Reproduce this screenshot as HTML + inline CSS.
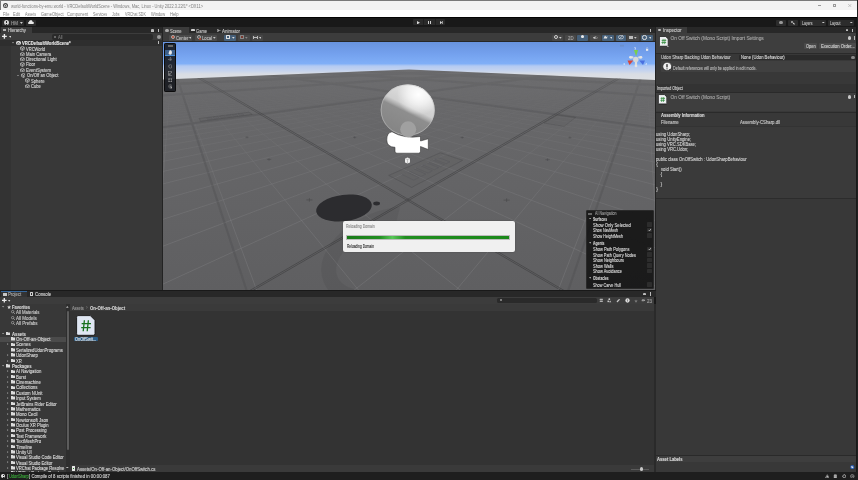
<!DOCTYPE html>
<html><head><meta charset="utf-8">
<style>
*{box-sizing:border-box;margin:0;padding:0}
html,body{width:858px;height:480px;overflow:hidden;background:#191919;font-family:"Liberation Sans",sans-serif;color:#c4c4c4;position:relative}
.a{position:absolute}
.t{position:absolute;white-space:pre;line-height:1;-webkit-text-stroke:0.12px}
svg{position:absolute;display:block}
</style></head><body><div style="position:absolute;left:0;top:0;width:858px;height:480px;will-change:transform;overflow:hidden">
<div class="a" style="left:0px;top:0px;width:858px;height:10px;background:#f3f3f3;"></div>
<div class="a" style="left:0px;top:0px;width:858px;height:1px;background:#7a7a7a;"></div>
<div class="a" style="left:0px;top:0px;width:1px;height:17px;background:#7a7a7a;"></div>
<div class="a" style="left:0px;top:10px;width:858px;height:7px;background:#ffffff;"></div>
<div class="a" style="left:0px;top:17px;width:858px;height:1px;background:#050505;"></div>
<div class="a" style="left:3px;top:2.6px;width:5px;height:5px;border-radius:50%;background:#444"></div>
<svg style="left:3px;top:2.6px" width="5" height="5" viewBox="0 0 10 10"><path d="M5 2 L8 6.5 L2 6.5 Z" fill="none" stroke="#fff" stroke-width="1.2"/></svg>
<div class="t" style="left:10.5px;top:4.50px;font-size:4.5px;color:#808080;transform:scaleX(0.8892);transform-origin:0 0;-webkit-text-stroke:0;">world-functions-by-emu.world - VRCDefaultWorldScene - Windows, Mac, Linux - Unity 2022.3.22f1* &lt;DX11&gt;</div>
<div class="a" style="left:817.5px;top:5.2px;width:3.8px;height:0.5px;background:#9a9a9a;"></div>
<div class="a" style="left:832.8px;top:3.5px;width:3.4px;height:3.4px;border:0.45px solid #9a9a9a"></div>
<svg style="left:848px;top:3.6px" width="3.6" height="3.2" viewBox="0 0 3.6 3.2"><path d="M0 0L3.6 3.2M3.6 0L0 3.2" stroke="#9a9a9a" stroke-width="0.45"/></svg>
<div class="t" style="left:2.7px;top:12.70px;font-size:4.5px;color:#7c7c7c;transform:scaleX(0.8688);transform-origin:0 0;-webkit-text-stroke:0;">File</div>
<div class="t" style="left:13px;top:12.70px;font-size:4.5px;color:#7c7c7c;transform:scaleX(0.9027);transform-origin:0 0;-webkit-text-stroke:0;">Edit</div>
<div class="t" style="left:25px;top:12.70px;font-size:4.5px;color:#7c7c7c;transform:scaleX(0.8145);transform-origin:0 0;-webkit-text-stroke:0;">Assets</div>
<div class="t" style="left:40.5px;top:12.70px;font-size:4.5px;color:#7c7c7c;transform:scaleX(0.8907);transform-origin:0 0;-webkit-text-stroke:0;">GameObject</div>
<div class="t" style="left:67.3px;top:12.70px;font-size:4.5px;color:#7c7c7c;transform:scaleX(0.9112);transform-origin:0 0;-webkit-text-stroke:0;">Component</div>
<div class="t" style="left:93.3px;top:12.70px;font-size:4.5px;color:#7c7c7c;transform:scaleX(0.8113);transform-origin:0 0;-webkit-text-stroke:0;">Services</div>
<div class="t" style="left:112.3px;top:12.70px;font-size:4.5px;color:#7c7c7c;transform:scaleX(0.789);transform-origin:0 0;-webkit-text-stroke:0;">Jobs</div>
<div class="t" style="left:124.8px;top:12.70px;font-size:4.5px;color:#7c7c7c;transform:scaleX(0.7921);transform-origin:0 0;-webkit-text-stroke:0;">VRChat SDK</div>
<div class="t" style="left:150.6px;top:12.70px;font-size:4.5px;color:#7c7c7c;transform:scaleX(0.8872);transform-origin:0 0;-webkit-text-stroke:0;">Window</div>
<div class="t" style="left:169.8px;top:12.70px;font-size:4.5px;color:#7c7c7c;transform:scaleX(0.9076);transform-origin:0 0;-webkit-text-stroke:0;">Help</div>
<div class="a" style="left:0px;top:18px;width:858px;height:9px;background:#191919;"></div>
<div class="a" style="left:2px;top:19.5px;width:21.5px;height:6px;background:#2c2c2c;border-radius:1px"></div>
<div class="a" style="left:4.1px;top:20.1px;width:5px;height:5px;border-radius:50%;background:#d4d4d4"></div>
<div class="a" style="left:6.25px;top:21.1px;width:0.7px;height:2.0px;background:#2a2a2a;"></div>
<div class="a" style="left:6.25px;top:23.5px;width:0.7px;height:0.7px;background:#2a2a2a;"></div>
<div class="t" style="left:11.2px;top:21.68px;font-size:4.6px;color:#9a9a9a;transform:scaleX(0.9784);transform-origin:0 0;">HM</div>
<svg style="left:20.3px;top:21.8px" width="2.8" height="2" viewBox="0 0 3 2"><path d="M0 0H3L1.5 2Z" fill="#d0d0d0"/></svg>
<div class="a" style="left:25.8px;top:19.5px;width:10px;height:6px;background:#2c2c2c;border-radius:1px"></div>
<svg style="left:27.8px;top:20.3px" width="6" height="4" viewBox="0 0 12 8"><path d="M2 8 A2 2 0 0 1 2 4 A3.5 3.5 0 0 1 9 3.5 A2.3 2.3 0 0 1 10 8Z" fill="#e8e8e8"/></svg>
<div class="a" style="left:413px;top:19.2px;width:32px;height:6px;background:#2a2a2a;border-radius:1px"></div>
<div class="a" style="left:423.3px;top:19.2px;width:0.5px;height:6px;background:#1f1f1f;"></div>
<div class="a" style="left:434.5px;top:19.2px;width:0.5px;height:6px;background:#1f1f1f;"></div>
<svg style="left:416.5px;top:20.5px" width="3" height="3.4" viewBox="0 0 3 3.4"><path d="M0 0L3 1.7L0 3.4Z" fill="#d8d8d8"/></svg>
<div class="a" style="left:428.2px;top:20.6px;width:0.9px;height:3.2px;background:#cfcfcf;"></div>
<div class="a" style="left:430px;top:20.6px;width:0.9px;height:3.2px;background:#cfcfcf;"></div>
<svg style="left:439.5px;top:20.6px" width="3.2" height="3.2" viewBox="0 0 3.2 3.2"><path d="M0 0L2.2 1.6L0 3.2Z" fill="#d8d8d8"/><rect x="2.4" y="0" width="0.8" height="3.2" fill="#d8d8d8"/></svg>
<div class="a" style="left:776px;top:19.5px;width:10px;height:6px;background:#2c2c2c;border-radius:1px"></div>
<div class="a" style="left:779px;top:20.6px;width:3.8px;height:3.8px;border-radius:50%;background:#9a9a9a"></div>
<div class="a" style="left:788px;top:19.5px;width:9.5px;height:6px;background:#2c2c2c;border-radius:1px"></div>
<div class="a" style="left:790.8px;top:20.7px;width:2.6px;height:2.6px;border-radius:50%;border:0.7px solid #ddd"></div>
<div class="a" style="left:793px;top:23px;width:1.6px;height:0.7px;background:#ddd;transform:rotate(45deg)"></div>
<div class="a" style="left:800px;top:19.5px;width:26px;height:6px;background:#2c2c2c;border-radius:1px"></div>
<div class="t" style="left:802px;top:21.58px;font-size:4.6px;color:#bdbdbd;transform:scaleX(0.7605);transform-origin:0 0;">Layers</div>
<svg style="left:822px;top:21.6px" width="2.6" height="1.8" viewBox="0 0 3 2"><path d="M0 0H3L1.5 2Z" fill="#ccc"/></svg>
<div class="a" style="left:828px;top:19.5px;width:26px;height:6px;background:#2c2c2c;border-radius:1px"></div>
<div class="t" style="left:830px;top:21.58px;font-size:4.6px;color:#bdbdbd;transform:scaleX(0.7602);transform-origin:0 0;">Layout</div>
<svg style="left:850px;top:21.6px" width="2.6" height="1.8" viewBox="0 0 3 2"><path d="M0 0H3L1.5 2Z" fill="#ccc"/></svg>
<div class="a" style="left:0px;top:27px;width:858px;height:6px;background:#282828;"></div>
<div class="a" style="left:1px;top:27px;width:31px;height:6px;background:#3c3c3c;"></div>
<div class="a" style="left:3px;top:28.8px;width:3px;height:2.6px;background:transparent;background:repeating-linear-gradient(#b0b0b0 0 0.55px,transparent 0.55px 1px)"></div>
<div class="t" style="left:8px;top:29.28px;font-size:4.6px;color:#c8c8c8;transform:scaleX(0.9145);transform-origin:0 0;">Hierarchy</div>
<div class="a" style="left:150.5px;top:28.6px;width:3px;height:3px;border-radius:1px 1px 0 0;background:#bbb"></div>
<div class="a" style="left:157.6px;top:28.5px;width:0.9px;height:3.2px;background:#bbb;"></div>
<div class="a" style="left:0px;top:33px;width:162px;height:7px;background:#3c3c3c;"></div>
<svg style="left:2.4px;top:34.4px" width="4.8" height="4.8" viewBox="0 0 9 9"><path d="M4.5 0V9M0 4.5H9" stroke="#ececec" stroke-width="2.6"/></svg>
<svg style="left:8.5px;top:36.2px" width="2.6" height="1.9" viewBox="0 0 3 2"><path d="M0 0H3L1.5 2Z" fill="#ddd"/></svg>
<div class="a" style="left:52.4px;top:34px;width:101px;height:5.8px;background:#2a2a2a;border-radius:2px"></div>
<div class="a" style="left:53.7px;top:35.6px;width:2px;height:2px;border-radius:50%;border:0.5px solid #999"></div>
<div class="t" style="left:58px;top:36.08px;font-size:4.6px;color:#7a7a7a;transform:scaleX(0.8802);transform-origin:0 0;">All</div>
<div class="a" style="left:156.5px;top:34.6px;width:4px;height:4px;border-radius:50%;background:#9a9a9a"></div>
<div class="a" style="left:0px;top:40px;width:162px;height:250px;background:#383838;"></div>
<div class="a" style="left:0px;top:40px;width:11px;height:250px;background:#333333;"></div>
<div class="a" style="left:0px;top:40.2px;width:162px;height:5.6px;background:#2e2e2e;"></div>
<svg style="left:12.3px;top:42.2px" width="2" height="1.5" viewBox="0 0 3 2"><path d="M0 0H3L1.5 2Z" fill="#9a9a9a"/></svg>
<div class="a" style="left:16px;top:40.7px;width:4.8px;height:4.8px;border-radius:50%;background:#e6e6e6"></div>
<svg style="left:16px;top:40.7px" width="4.8" height="4.8" viewBox="0 0 10 10"><path d="M5 2.2L7.6 6.6H2.4Z" fill="none" stroke="#2e2e2e" stroke-width="1.1"/></svg>
<div class="t" style="left:22.3px;top:41.98px;font-size:4.6px;color:#e4e4e4;font-weight:bold;transform:scaleX(0.9087);transform-origin:0 0;">VRCDefaultWorldScene*</div>
<div class="a" style="left:157.6px;top:41.3px;width:0.9px;height:3.2px;background:#bbb;"></div>
<svg style="left:20px;top:46.1px" width="4.8" height="4.8" viewBox="0 0 10 10"><path d="M5 0.8L8.9 2.9V7.1L5 9.2L1.1 7.1V2.9Z M1.1 2.9L5 5L8.9 2.9M5 5V9.2" fill="none" stroke="#d4d4d4" stroke-width="1.35" stroke-linejoin="round"/></svg>
<div class="t" style="left:26.3px;top:47.58px;font-size:4.6px;color:#d4d4d4;transform:scaleX(0.8826);transform-origin:0 0;">VRCWorld</div>
<svg style="left:20px;top:51.6px" width="4.8" height="4.8" viewBox="0 0 10 10"><path d="M5 0.8L8.9 2.9V7.1L5 9.2L1.1 7.1V2.9Z M1.1 2.9L5 5L8.9 2.9M5 5V9.2" fill="none" stroke="#d4d4d4" stroke-width="1.35" stroke-linejoin="round"/></svg>
<div class="t" style="left:26.3px;top:53.08px;font-size:4.6px;color:#d4d4d4;transform:scaleX(0.9127);transform-origin:0 0;">Main Camera</div>
<svg style="left:20px;top:56.7px" width="4.8" height="4.8" viewBox="0 0 10 10"><path d="M5 0.8L8.9 2.9V7.1L5 9.2L1.1 7.1V2.9Z M1.1 2.9L5 5L8.9 2.9M5 5V9.2" fill="none" stroke="#d4d4d4" stroke-width="1.35" stroke-linejoin="round"/></svg>
<div class="t" style="left:26.3px;top:58.18px;font-size:4.6px;color:#d4d4d4;transform:scaleX(0.9307);transform-origin:0 0;">Directional Light</div>
<svg style="left:20px;top:62.00000000000001px" width="4.8" height="4.8" viewBox="0 0 10 10"><path d="M5 0.8L8.9 2.9V7.1L5 9.2L1.1 7.1V2.9Z M1.1 2.9L5 5L8.9 2.9M5 5V9.2" fill="none" stroke="#d4d4d4" stroke-width="1.35" stroke-linejoin="round"/></svg>
<div class="t" style="left:26.3px;top:63.48px;font-size:4.6px;color:#d4d4d4;transform:scaleX(0.8778);transform-origin:0 0;">Floor</div>
<svg style="left:20px;top:67.6px" width="4.8" height="4.8" viewBox="0 0 10 10"><path d="M5 0.8L8.9 2.9V7.1L5 9.2L1.1 7.1V2.9Z M1.1 2.9L5 5L8.9 2.9M5 5V9.2" fill="none" stroke="#d4d4d4" stroke-width="1.35" stroke-linejoin="round"/></svg>
<div class="t" style="left:26.3px;top:69.08px;font-size:4.6px;color:#d4d4d4;transform:scaleX(0.9262);transform-origin:0 0;">EventSystem</div>
<svg style="left:20.5px;top:72.89999999999999px" width="4.8" height="4.8" viewBox="0 0 10 10"><path d="M5 0.8L8.9 2.9V7.1L5 9.2L1.1 7.1V2.9Z M1.1 2.9L5 5L8.9 2.9M5 5V9.2" fill="none" stroke="#d4d4d4" stroke-width="1.35" stroke-linejoin="round"/></svg>
<div class="t" style="left:26.6px;top:74.38px;font-size:4.6px;color:#d4d4d4;transform:scaleX(0.9119);transform-origin:0 0;">On/Off an Object</div>
<svg style="left:25px;top:78.19999999999999px" width="4.8" height="4.8" viewBox="0 0 10 10"><path d="M5 0.8L8.9 2.9V7.1L5 9.2L1.1 7.1V2.9Z M1.1 2.9L5 5L8.9 2.9M5 5V9.2" fill="none" stroke="#d4d4d4" stroke-width="1.35" stroke-linejoin="round"/></svg>
<div class="t" style="left:31px;top:79.68px;font-size:4.6px;color:#d4d4d4;transform:scaleX(0.9101);transform-origin:0 0;">Sphere</div>
<svg style="left:25px;top:83.6px" width="4.8" height="4.8" viewBox="0 0 10 10"><path d="M5 0.8L8.9 2.9V7.1L5 9.2L1.1 7.1V2.9Z M1.1 2.9L5 5L8.9 2.9M5 5V9.2" fill="none" stroke="#d4d4d4" stroke-width="1.35" stroke-linejoin="round"/></svg>
<div class="t" style="left:31px;top:85.08px;font-size:4.6px;color:#d4d4d4;transform:scaleX(0.8912);transform-origin:0 0;">Cube</div>
<svg style="left:16.8px;top:74.6px" width="2" height="1.5" viewBox="0 0 3 2"><path d="M0 0H3L1.5 2Z" fill="#9a9a9a"/></svg>
<div class="a" style="left:162px;top:27px;width:1px;height:263px;background:#232323;"></div>
<div class="a" style="left:163px;top:27px;width:26px;height:6px;background:#3c3c3c;"></div>
<div class="a" style="left:165.4px;top:28.7px;width:3.4px;height:3.4px;border-radius:50%;background:#a8a8a8"></div>
<div class="t" style="left:170px;top:30.18px;font-size:4.6px;color:#c8c8c8;transform:scaleX(0.8817);transform-origin:0 0;">Scene</div>
<svg style="left:191px;top:28.8px" width="4" height="2.6" viewBox="0 0 8 5"><path d="M1.5 0H6.5A1.5 2.5 0 0 1 6.5 5L5.5 4H2.5L1.5 5A1.5 2.5 0 0 1 1.5 0Z" fill="#d0d0d0"/></svg>
<div class="t" style="left:196px;top:30.18px;font-size:4.6px;color:#c8c8c8;transform:scaleX(0.8781);transform-origin:0 0;">Game</div>
<svg style="left:217px;top:28.6px" width="3.5" height="3" viewBox="0 0 7 6"><path d="M0 1L4 3L0 5M4 3H7M2 0V6" stroke="#ddd" stroke-width="1" fill="none"/></svg>
<div class="t" style="left:221.5px;top:30.18px;font-size:4.6px;color:#c8c8c8;transform:scaleX(0.9779);transform-origin:0 0;">Animator</div>
<div class="a" style="left:650.3px;top:28.5px;width:0.9px;height:3.2px;background:#bbb;"></div>
<div class="a" style="left:163px;top:33px;width:492px;height:9px;background:#3c3c3c;"></div>
<div class="a" style="left:163px;top:41.3px;width:492px;height:0.7px;background:#262626;"></div>
<div class="a" style="left:169px;top:34.5px;width:23.4px;height:6.5px;background:#4a4a4a;border-radius:1px"></div>
<div class="a" style="left:170.6px;top:35.4px;width:4px;height:4px;border-radius:50%;border:0.6px solid #aaa;background:#c0442c"></div>
<div class="t" style="left:175.5px;top:37.18px;font-size:4.6px;color:#bdbdbd;transform:scaleX(0.9053);transform-origin:0 0;">Center</div>
<svg style="left:188.8px;top:36.7px" width="2.7" height="1.9" viewBox="0 0 3 2"><path d="M0 0H3L1.5 2Z" fill="#c8c8c8"/></svg>
<div class="a" style="left:195px;top:34.5px;width:21.6px;height:6.5px;background:#4a4a4a;border-radius:1px"></div>
<div class="a" style="left:196.6px;top:35.4px;width:4px;height:4px;border-radius:50%;border:0.6px solid #aaa;background:#555"></div>
<div class="a" style="left:198.8px;top:37.6px;width:2px;height:2px;border-radius:50%;background:#c0442c"></div>
<div class="t" style="left:201.5px;top:37.18px;font-size:4.6px;color:#bdbdbd;transform:scaleX(0.9093);transform-origin:0 0;">Local</div>
<svg style="left:213.10000000000002px;top:36.7px" width="2.7" height="1.9" viewBox="0 0 3 2"><path d="M0 0H3L1.5 2Z" fill="#c8c8c8"/></svg>
<div class="a" style="left:224.3px;top:34.5px;width:12px;height:6.5px;background:#46607a;border-radius:1px"></div>
<div class="a" style="left:226px;top:35.4px;width:4px;height:4px;border:0.7px solid #e0e0e0;border-radius:0.6px"></div>
<svg style="left:232.10000000000002px;top:36.7px" width="2.7" height="1.9" viewBox="0 0 3 2"><path d="M0 0H3L1.5 2Z" fill="#ddd"/></svg>
<div class="a" style="left:238px;top:34.5px;width:11.5px;height:6.5px;background:#474747;border-radius:1px"></div>
<div class="a" style="left:239.5px;top:35.4px;width:4px;height:4px;border:0.6px solid #888;border-radius:0.6px;background:#7a3a30"></div>
<svg style="left:245.3px;top:36.7px" width="2.7" height="1.9" viewBox="0 0 3 2"><path d="M0 0H3L1.5 2Z" fill="#888"/></svg>
<div class="a" style="left:251.6px;top:34.5px;width:11.2px;height:6.5px;background:#474747;border-radius:1px"></div>
<div class="a" style="left:253.4px;top:35.6px;width:4.4px;height:3.6px;border-left:0.8px solid #bbb;border-right:0.8px solid #bbb;background:linear-gradient(#0000 40%,#bbb 40% 60%,#0000 60%)"></div>
<svg style="left:258.8px;top:36.7px" width="2.7" height="1.9" viewBox="0 0 3 2"><path d="M0 0H3L1.5 2Z" fill="#ccc"/></svg>
<div class="a" style="left:551.9px;top:34.5px;width:11.1px;height:6.5px;background:#474747;border-radius:1px"></div>
<div class="a" style="left:553.6px;top:35.4px;width:4px;height:4px;border-radius:50%;border:0.8px solid #d0d0d0"></div>
<svg style="left:559.4px;top:36.7px" width="2.7" height="1.9" viewBox="0 0 3 2"><path d="M0 0H3L1.5 2Z" fill="#c8c8c8"/></svg>
<div class="a" style="left:565px;top:34.5px;width:11.4px;height:6.5px;background:#474747;border-radius:1px"></div>
<div class="t" style="left:567.6px;top:37.18px;font-size:4.6px;color:#a8a8a8;transform:scaleX(0.9352);transform-origin:0 0;">2D</div>
<div class="a" style="left:577px;top:34.5px;width:11px;height:6.5px;background:#46607a;border-radius:1px"></div>
<div class="a" style="left:581px;top:35.3px;width:3px;height:3.2px;border-radius:50% 50% 40% 40%;background:#e8e8e8"></div>
<div class="a" style="left:589.7px;top:34.5px;width:11.1px;height:6.5px;background:#474747;border-radius:1px"></div>
<svg style="left:592.5px;top:35.6px" width="5" height="3.6" viewBox="0 0 10 7"><path d="M0 2.5H2L5 0V7L2 4.5H0Z" fill="#ccc"/><path d="M6.5 1L9 3.5L6.5 6" stroke="#ccc" fill="none"/></svg>
<div class="a" style="left:601.5px;top:34.5px;width:12.5px;height:6.5px;background:#46607a;border-radius:1px"></div>
<svg style="left:603.2px;top:35.4px" width="5" height="4" viewBox="0 0 10 8"><path d="M1 7L4 1L7 4L9 2L8 7Z" fill="#e0e0e0"/></svg>
<svg style="left:609.5999999999999px;top:36.7px" width="2.7" height="1.9" viewBox="0 0 3 2"><path d="M0 0H3L1.5 2Z" fill="#ddd"/></svg>
<div class="a" style="left:615.5px;top:34.5px;width:10.5px;height:6.5px;background:#46607a;border-radius:1px"></div>
<svg style="left:617.6px;top:35.2px" width="6" height="4.4" viewBox="0 0 12 9"><ellipse cx="6" cy="4.5" rx="5.5" ry="3.5" fill="none" stroke="#ddd" stroke-width="1.3"/><path d="M2 8L10 1" stroke="#ddd" stroke-width="1.3"/></svg>
<div class="a" style="left:627.4px;top:34.5px;width:11.2px;height:6.5px;background:#474747;border-radius:1px"></div>
<div class="a" style="left:629.3px;top:35.8px;width:3.6px;height:3px;background:#bbb"></div>
<svg style="left:634.1999999999999px;top:36.7px" width="2.7" height="1.9" viewBox="0 0 3 2"><path d="M0 0H3L1.5 2Z" fill="#c8c8c8"/></svg>
<div class="a" style="left:640.7px;top:34.5px;width:12.6px;height:6.5px;background:#46607a;border-radius:1px"></div>
<div class="a" style="left:642.4px;top:35.2px;width:4.4px;height:4.4px;border-radius:50%;border:1px solid #e0e0e0"></div>
<svg style="left:648.5999999999999px;top:36.7px" width="2.7" height="1.9" viewBox="0 0 3 2"><path d="M0 0H3L1.5 2Z" fill="#ddd"/></svg>
<div class="a" style="left:655px;top:27px;width:1px;height:263px;background:#232323;"></div>
<svg style="left:163px;top:42px" width="492" height="248" viewBox="0 0 492 248"><defs>
<linearGradient id="sky" x1="0" y1="0" x2="0" y2="1"><stop offset="0" stop-color="#6893de"/><stop offset="0.3" stop-color="#74a1ee"/><stop offset="0.54" stop-color="#80aff7"/><stop offset="0.6" stop-color="#b3caf2"/><stop offset="0.72" stop-color="#c6d4ee"/><stop offset="0.8" stop-color="#d9dde4"/><stop offset="1" stop-color="#dfe1e3"/></linearGradient>
<linearGradient id="gnd" x1="0" y1="0" x2="0" y2="1"><stop offset="0" stop-color="#6e6e70"/><stop offset="0.15" stop-color="#68686a"/><stop offset="1" stop-color="#5f5f61"/></linearGradient>
<linearGradient id="fade" x1="0" y1="0" x2="0" y2="1"><stop offset="0.15" stop-color="#fff" stop-opacity="0"/><stop offset="0.3" stop-color="#fff" stop-opacity="0.3"/><stop offset="0.5" stop-color="#fff" stop-opacity="0.75"/><stop offset="0.75" stop-color="#fff"/><stop offset="1" stop-color="#fff"/></linearGradient>
<mask id="fm"><rect width="492" height="248" fill="url(#fade)"/></mask>
<radialGradient id="sph" cx="0.68" cy="0.3" r="0.85"><stop offset="0" stop-color="#ffffff"/><stop offset="0.25" stop-color="#e4e4e4"/><stop offset="0.5" stop-color="#a9a9a9"/><stop offset="0.8" stop-color="#868686"/><stop offset="1" stop-color="#9a9a9a"/></radialGradient>
<linearGradient id="sph2" x1="0.26" y1="0.96" x2="0.74" y2="0.04"><stop offset="0" stop-color="#848484"/><stop offset="0.45" stop-color="#8e8e8e"/><stop offset="0.5" stop-color="#adadad"/><stop offset="0.57" stop-color="#cfcfcf"/><stop offset="1" stop-color="#e6e6e6"/></linearGradient><radialGradient id="sphh" cx="0.7" cy="0.2" r="0.4"><stop offset="0" stop-color="#fff" stop-opacity="1"/><stop offset="0.5" stop-color="#fff" stop-opacity="0.6"/><stop offset="1" stop-color="#fff" stop-opacity="0"/></radialGradient>
</defs><rect x="0" y="0" width="492" height="40" fill="url(#sky)"/><path d="M0 37.599999999999994 L246 27.599999999999994 L492 38 L492 248 L0 248Z" fill="url(#gnd)"/><clipPath id="gc"><path d="M0 37.599999999999994 L246 27.599999999999994 L492 38 L492 248 L0 248Z"/></clipPath><linearGradient id="fade2" x1="0" y1="0" x2="0" y2="1"><stop offset="0.12" stop-color="#fff" stop-opacity="0.35"/><stop offset="0.3" stop-color="#fff" stop-opacity="0.85"/><stop offset="1" stop-color="#fff"/></linearGradient><mask id="fm2"><rect width="492" height="248" fill="url(#fade2)"/></mask><g clip-path="url(#gc)" mask="url(#fm)"><path d="M6431.9 4265.3L486.7 23.1 M-6001.5 4252.2L5.2 22.6 M4535.9 4263.3L485.5 23.1 M-4105.5 4254.2L6.4 22.6 M2639.9 4261.3L484.3 23.1 M-2209.5 4256.2L7.6 22.6 M743.9 4259.3L483.2 23.1 M-313.5 4258.2L8.8 22.6 M-1152.1 4257.3L482.0 23.1 M1582.5 4260.2L10.0 22.6 M-3048.1 4255.3L480.8 23.1 M3478.5 4262.2L11.1 22.6 M-4944.1 4253.3L479.7 23.1 M5374.5 4264.2L12.3 22.6 M-8736.1 4249.3L477.4 23.1 M9166.5 4268.2L14.6 22.6 M-10632.1 4247.3L476.2 23.1 M11062.5 4270.2L15.7 22.6 M-12528.1 4245.3L475.1 23.1 M12958.5 4272.2L16.9 22.6 M-14424.1 4243.3L473.9 23.1 M14854.5 4274.2L18.0 22.6 M-16320.1 4241.3L472.8 23.1 M16750.5 4276.2L19.1 22.6 M-18216.1 4239.3L471.7 23.0 M18646.5 4278.2L20.3 22.6 M-20112.1 4237.3L470.6 23.0 M20542.5 4280.2L21.4 22.6 M-22008.1 4235.3L469.5 23.0 M22438.5 4282.2L22.5 22.6 M-23904.1 4233.3L468.4 23.0 M24334.5 4284.2L23.6 22.6 M-25800.1 4231.3L467.3 23.0 M26230.5 4286.2L24.7 22.6 M-27696.1 4229.3L466.2 23.0 M28126.5 4288.2L25.8 22.5 M-29592.1 4227.3L465.1 23.0 M30022.5 4290.2L26.9 22.5 M-31488.1 4225.3L464.0 23.0 M31918.5 4292.2L28.0 22.5 M-33384.1 4223.3L462.9 23.0 M33814.5 4294.2L29.0 22.5 M-35280.1 4221.3L461.8 23.0 M35710.5 4296.2L30.1 22.5 M-37176.1 4219.3L460.8 23.0 M37606.5 4298.2L31.2 22.5 M-39072.1 4217.3L459.7 23.0 M39502.5 4300.2L32.2 22.5 M-40968.1 4215.3L458.7 23.0 M41398.5 4302.2L33.3 22.5 M-42864.1 4213.3L457.6 23.0 M43294.5 4304.2L34.4 22.5 M-44760.1 4211.3L456.6 22.9 M45190.5 4306.2L35.4 22.5 M-46656.1 4209.3L455.5 22.9 M47086.5 4308.2L36.5 22.5 M-48552.1 4207.3L454.5 22.9 M48982.5 4310.2L37.5 22.5 M-50448.1 4205.3L453.4 22.9 M50878.5 4312.2L38.5 22.5 M-52344.1 4203.3L452.4 22.9 M52774.5 4314.2L39.6 22.5 M-54240.1 4201.3L451.4 22.9 M54670.5 4316.2L40.6 22.5 M-56136.1 4199.3L450.4 22.9 M56566.5 4318.2L41.6 22.5 M-58032.1 4197.3L449.3 22.9 M58462.5 4320.2L42.6 22.5 M-59928.1 4195.3L448.3 22.9 M60358.5 4322.2L43.6 22.5 M-61824.1 4193.3L447.3 22.9 M62254.5 4324.2L44.6 22.5 M-63720.1 4191.3L446.3 22.9 M64150.5 4326.2L45.6 22.5 M-65616.1 4189.3L445.3 22.9 M66046.5 4328.2L46.6 22.5 M-67512.1 4187.3L444.3 22.9 M67942.5 4330.2L47.6 22.5 M-69408.1 4185.3L443.4 22.9 M69838.5 4332.2L48.6 22.4 M-71304.1 4183.3L442.4 22.9 M71734.5 4334.2L49.6 22.4 M-73200.1 4181.3L441.4 22.8 M73630.5 4336.2L50.6 22.4 M-75096.1 4179.3L440.4 22.8 M75526.5 4338.2L51.6 22.4 M-76992.1 4177.3L439.4 22.8 M77422.5 4340.2L52.5 22.4 M-78888.1 4175.3L438.5 22.8 M79318.5 4342.2L53.5 22.4 M-80784.1 4173.3L437.5 22.8 M81214.5 4344.2L54.4 22.4 M-82680.1 4171.3L436.6 22.8 M83110.5 4346.2L55.4 22.4 M-84576.1 4169.3L435.6 22.8 M85006.5 4348.2L56.4 22.4 M-86472.1 4167.3L434.7 22.8 M86902.5 4350.2L57.3 22.4 M-88368.1 4165.3L433.7 22.8 M88798.5 4352.2L58.3 22.4 M-90264.1 4163.3L432.8 22.8 M90694.5 4354.2L59.2 22.4 M-92160.1 4161.3L431.8 22.8 M92590.5 4356.2L60.1 22.4 M-94056.1 4159.3L430.9 22.8 M94486.5 4358.2L61.1 22.4 M-95952.1 4157.3L430.0 22.8 M96382.5 4360.2L62.0 22.4 M-97848.1 4155.3L429.1 22.8 M98278.5 4362.2L62.9 22.4 M-99744.1 4153.3L428.1 22.8 M100174.5 4364.2L63.8 22.4 M-101640.1 4151.3L427.2 22.8 M102070.5 4366.2L64.7 22.4 M-103536.1 4149.3L426.3 22.8 M103966.5 4368.2L65.7 22.4 M-105432.1 4147.3L425.4 22.7 M105862.5 4370.2L66.6 22.4 M-107328.1 4145.3L424.5 22.7 M107758.5 4372.2L67.5 22.4 M-109224.1 4143.3L423.6 22.7 M109654.5 4374.2L68.4 22.4 M-111120.1 4141.3L422.7 22.7 M111550.5 4376.2L69.3 22.4 M-113016.1 4139.3L421.8 22.7 M113446.5 4378.2L70.2 22.3 M-114912.1 4137.3L420.9 22.7 M115342.5 4380.2L71.0 22.3 M-116808.1 4135.3L420.0 22.7 M117238.5 4382.2L71.9 22.3 M-118704.1 4133.3L419.2 22.7 M119134.5 4384.2L72.8 22.3 M-120600.1 4131.3L418.3 22.7 M121030.5 4386.2L73.7 22.3 M-122496.1 4129.3L417.4 22.7 M122926.5 4388.2L74.6 22.3 M-124392.1 4127.3L416.5 22.7 M124822.5 4390.2L75.4 22.3 M-126288.1 4125.3L415.7 22.7 M126718.5 4392.2L76.3 22.3 M-128184.1 4123.3L414.8 22.7 M128614.5 4394.2L77.2 22.3 M-130080.1 4121.3L413.9 22.7 M130510.5 4396.2L78.0 22.3 M-131976.1 4119.3L413.1 22.7 M132406.5 4398.2L78.9 22.3 M-133872.1 4117.3L412.2 22.7 M134302.5 4400.2L79.7 22.3 M-135768.1 4115.3L411.4 22.7 M136198.5 4402.2L80.6 22.3 M-137664.1 4113.3L410.5 22.6 M138094.5 4404.2L81.4 22.3 M-139560.1 4111.3L409.7 22.6 M139990.5 4406.2L82.3 22.3 M-141456.1 4109.3L408.9 22.6 M141886.5 4408.2L83.1 22.3 M-143352.1 4107.3L408.0 22.6 M143782.5 4410.2L83.9 22.3 M-145248.1 4105.3L407.2 22.6 M145678.5 4412.2L84.8 22.3 M-147144.1 4103.3L406.4 22.6 M147574.5 4414.2L85.6 22.3 M-149040.1 4101.3L405.6 22.6 M149470.5 4416.2L86.4 22.3 M-150936.1 4099.3L404.7 22.6 M151366.5 4418.2L87.2 22.3 M-152832.1 4097.3L403.9 22.6 M153262.5 4420.2L88.0 22.3 M-154728.1 4095.3L403.1 22.6 M155158.5 4422.2L88.9 22.3 M-156624.1 4093.3L402.3 22.6 M157054.5 4424.2L89.7 22.3" stroke="#808082" stroke-width="0.5" fill="none" opacity="0.85"/></g><g clip-path="url(#gc)" mask="url(#fm2)"><path d="M-962.5 4257.5L482.1 23.1 M1392.9 4260.0L9.9 22.6 M-30919.3 4225.9L464.3 23.0 M31349.7 4291.6L27.6 22.5 M-60876.1 4194.3L447.8 22.9 M61306.5 4323.2L44.1 22.5 M-90832.9 4162.7L432.5 22.8 M91263.3 4354.8L59.5 22.4" stroke="#4e4e50" stroke-width="2.2" fill="none" opacity="0.42"/><path d="M-6839.7 4251.9L478.9 23.7M-6840.5 4250.6L478.1 22.4" stroke="#3c3c3e" stroke-width="0.6" fill="none"/><path d="M7270.9 4265.5L13.8 22.0M7270.2 4266.8L13.1 23.3" stroke="#3c3c3e" stroke-width="0.6" fill="none"/></g><clipPath id="lc"><path d="M0 0H277L217 248H0Z"/></clipPath><g clip-path="url(#lc)"><ellipse cx="225" cy="214" rx="62" ry="38" transform="rotate(-22 225 214)" fill="none" stroke="#000" stroke-width="15" opacity="0.055"/></g><path d="M248.7 145.5 L254.0 142.6 L259.1 139.9 L263.9 137.4 L268.6 134.9 L273.0 132.5 L277.3 130.2 L281.4 128.0 L285.3 125.9 L289.1 123.9 L292.8 122.0 L296.3 120.1 L299.6 118.3 L299.6 118.3 L297.6 117.6 L295.7 117.0 L293.7 116.3 L291.8 115.7 L289.9 115.0 L288.0 114.4 L286.2 113.8 L284.4 113.1 L282.6 112.5 L280.8 111.9 L279.0 111.3 L277.3 110.8 L277.3 110.8 L273.8 112.3 L270.2 113.9 L266.5 115.5 L262.6 117.2 L258.6 119.0 L254.4 120.8 L250.0 122.7 L245.6 124.7 L240.9 126.7 L236.0 128.9 L231.0 131.1 L225.7 133.4 L225.7 133.4 L227.4 134.3 L229.2 135.3 L231.0 136.2 L232.9 137.2 L234.7 138.1 L236.6 139.1 L238.6 140.1 L240.5 141.2 L242.5 142.2 L244.6 143.3 L246.6 144.4 L248.7 145.5Z" fill="#000" fill-opacity="0.03" stroke="#4a4a4c" stroke-width="0.6" opacity="0.7" stroke-linejoin="round"/><path d="M250.7 138.2 L252.4 137.3 L254.2 136.5 L255.8 135.6 L255.8 135.6 L251.8 133.7 L247.9 131.9 L244.1 130.1 L244.1 130.1 L242.4 130.9 L240.7 131.7 L238.9 132.5 L238.9 132.5 L242.7 134.3 L246.6 136.2 L250.7 138.2Z" fill="none" stroke="#505052" stroke-width="0.45" opacity="0.6"/><path d="M258.0 134.5 L259.6 133.7 L261.2 132.9 L262.8 132.1 L262.8 132.1 L258.8 130.3 L254.9 128.6 L251.1 126.9 L251.1 126.9 L249.5 127.6 L247.9 128.4 L246.2 129.1 L246.2 129.1 L250.0 130.9 L253.9 132.7 L258.0 134.5Z" fill="none" stroke="#505052" stroke-width="0.45" opacity="0.6"/><path d="M264.9 131.0 L266.4 130.3 L267.9 129.5 L269.4 128.7 L269.4 128.7 L265.4 127.1 L261.5 125.4 L257.7 123.8 L257.7 123.8 L256.2 124.5 L254.7 125.2 L253.1 125.9 L253.1 125.9 L256.9 127.6 L260.8 129.3 L264.9 131.0Z" fill="none" stroke="#505052" stroke-width="0.45" opacity="0.6"/><path d="M271.3 127.8 L272.8 127.0 L274.2 126.3 L275.6 125.6 L275.6 125.6 L271.6 124.0 L267.7 122.5 L263.9 121.0 L263.9 121.0 L262.5 121.6 L261.1 122.3 L259.6 123.0 L259.6 123.0 L263.4 124.5 L267.3 126.1 L271.3 127.8Z" fill="none" stroke="#505052" stroke-width="0.45" opacity="0.6"/><path d="M277.4 124.7 L278.8 124.0 L280.1 123.3 L281.4 122.6 L281.4 122.6 L277.5 121.1 L273.6 119.7 L269.9 118.3 L269.9 118.3 L268.5 118.9 L267.1 119.5 L265.8 120.2 L265.8 120.2 L269.5 121.6 L273.4 123.1 L277.4 124.7Z" fill="none" stroke="#505052" stroke-width="0.45" opacity="0.6"/><path d="M283.1 121.8 L284.4 121.1 L285.7 120.5 L287.0 119.8 L287.0 119.8 L283.0 118.4 L279.2 117.0 L275.5 115.7 L275.5 115.7 L274.2 116.3 L272.9 116.9 L271.6 117.5 L271.6 117.5 L275.3 118.9 L279.2 120.3 L283.1 121.8Z" fill="none" stroke="#505052" stroke-width="0.45" opacity="0.6"/><path d="M37.6 79.3 L42.4 78.6 L47.2 78.0 L51.8 77.4 L56.3 76.8 L60.7 76.2 L65.1 75.6 L69.3 75.1 L73.5 74.5 L77.5 74.0 L81.5 73.5 L85.5 72.9 L89.3 72.4 L89.3 72.4 L89.0 72.2 L88.7 72.0 L88.4 71.9 L88.1 71.7 L87.9 71.5 L87.6 71.3 L87.3 71.1 L87.0 70.9 L86.7 70.7 L86.4 70.6 L86.2 70.4 L85.9 70.2 L85.9 70.2 L82.2 70.7 L78.4 71.1 L74.5 71.6 L70.6 72.1 L66.6 72.6 L62.5 73.1 L58.4 73.6 L54.1 74.2 L49.8 74.7 L45.4 75.3 L40.8 75.8 L36.2 76.4 L36.2 76.4 L36.3 76.6 L36.5 76.9 L36.6 77.1 L36.7 77.3 L36.8 77.6 L36.9 77.8 L37.0 78.0 L37.1 78.3 L37.3 78.5 L37.4 78.8 L37.5 79.0 L37.6 79.3Z" fill="#000" fill-opacity="0.03" stroke="#4a4a4c" stroke-width="0.6" opacity="0.7" stroke-linejoin="round"/><path d="M44.5 77.6 L46.1 77.4 L47.7 77.2 L49.3 77.0 L49.3 77.0 L49.0 76.5 L48.7 76.0 L48.4 75.6 L48.4 75.6 L46.8 75.8 L45.2 76.0 L43.7 76.2 L43.7 76.2 L43.9 76.6 L44.2 77.1 L44.5 77.6Z" fill="none" stroke="#505052" stroke-width="0.45" opacity="0.6"/><path d="M51.4 76.7 L52.9 76.5 L54.5 76.3 L56.0 76.1 L56.0 76.1 L55.6 75.6 L55.3 75.2 L54.9 74.8 L54.9 74.8 L53.4 74.9 L51.9 75.1 L50.3 75.3 L50.3 75.3 L50.7 75.8 L51.0 76.2 L51.4 76.7Z" fill="none" stroke="#505052" stroke-width="0.45" opacity="0.6"/><path d="M58.0 75.8 L59.5 75.6 L61.0 75.4 L62.5 75.2 L62.5 75.2 L62.1 74.8 L61.7 74.4 L61.3 74.0 L61.3 74.0 L59.8 74.1 L58.3 74.3 L56.8 74.5 L56.8 74.5 L57.2 74.9 L57.6 75.4 L58.0 75.8Z" fill="none" stroke="#505052" stroke-width="0.45" opacity="0.6"/><path d="M64.4 75.0 L65.9 74.8 L67.3 74.6 L68.8 74.4 L68.8 74.4 L68.3 74.0 L67.9 73.6 L67.4 73.2 L67.4 73.2 L66.0 73.4 L64.6 73.5 L63.1 73.7 L63.1 73.7 L63.5 74.1 L64.0 74.6 L64.4 75.0Z" fill="none" stroke="#505052" stroke-width="0.45" opacity="0.6"/><path d="M70.7 74.2 L72.1 74.0 L73.5 73.8 L74.9 73.6 L74.9 73.6 L74.4 73.2 L73.9 72.8 L73.4 72.4 L73.4 72.4 L72.0 72.6 L70.6 72.8 L69.2 72.9 L69.2 72.9 L69.7 73.3 L70.2 73.8 L70.7 74.2Z" fill="none" stroke="#505052" stroke-width="0.45" opacity="0.6"/><path d="M76.7 73.4 L78.1 73.2 L79.5 73.0 L80.8 72.9 L80.8 72.9 L80.3 72.5 L79.8 72.1 L79.2 71.7 L79.2 71.7 L77.9 71.8 L76.5 72.0 L75.2 72.2 L75.2 72.2 L75.7 72.6 L76.2 73.0 L76.7 73.4Z" fill="none" stroke="#505052" stroke-width="0.45" opacity="0.6"/><path d="M401.2 84.3 L402.3 83.4 L403.4 82.6 L404.4 81.8 L405.4 81.0 L406.4 80.2 L407.4 79.5 L408.3 78.7 L409.2 78.0 L410.1 77.3 L411.0 76.7 L411.8 76.0 L412.7 75.4 L412.7 75.4 L411.1 75.1 L409.6 74.9 L408.0 74.7 L406.5 74.5 L405.0 74.3 L403.5 74.1 L402.0 73.9 L400.5 73.7 L399.0 73.5 L397.6 73.3 L396.1 73.1 L394.7 72.9 L394.7 72.9 L393.7 73.5 L392.7 74.1 L391.6 74.7 L390.6 75.3 L389.5 76.0 L388.4 76.6 L387.2 77.3 L386.0 78.0 L384.8 78.7 L383.6 79.5 L382.3 80.2 L381.0 81.0 L381.0 81.0 L382.7 81.2 L384.3 81.5 L385.9 81.8 L387.5 82.0 L389.2 82.3 L390.9 82.6 L392.6 82.9 L394.3 83.1 L396.0 83.4 L397.7 83.7 L399.5 84.0 L401.2 84.3Z" fill="#000" fill-opacity="0.03" stroke="#4a4a4c" stroke-width="0.6" opacity="0.7"/><path d="M576.8 256.5H587.1M581.9 253.4V259.6" stroke="#3e3e40" stroke-width="0.79" opacity="0.75"/><path d="M537.8 158.3H543.8M540.8 156.5V160.1" stroke="#3e3e40" stroke-width="0.60" opacity="0.75"/><path d="M521.7 117.8H525.9M523.8 116.6V119.1" stroke="#3e3e40" stroke-width="0.50" opacity="0.75"/><path d="M512.9 95.7H516.2M514.5 94.7V96.7" stroke="#3e3e40" stroke-width="0.44" opacity="0.75"/><path d="M239.2 256.1H249.4M244.3 253.0V259.2" stroke="#3e3e40" stroke-width="0.79" opacity="0.75"/><path d="M340.6 158.1H346.6M343.6 156.3V159.9" stroke="#3e3e40" stroke-width="0.60" opacity="0.75"/><path d="M382.4 117.7H386.7M384.5 116.4V118.9" stroke="#3e3e40" stroke-width="0.50" opacity="0.75"/><path d="M405.3 95.6H408.5M406.9 94.6V96.6" stroke="#3e3e40" stroke-width="0.44" opacity="0.75"/><path d="M-98.5 255.8H-88.2M-93.4 252.7V258.8" stroke="#3e3e40" stroke-width="0.79" opacity="0.75"/><path d="M143.4 157.9H149.4M146.4 156.1V159.7" stroke="#3e3e40" stroke-width="0.60" opacity="0.75"/><path d="M243.2 117.5H247.4M245.3 116.3V118.8" stroke="#3e3e40" stroke-width="0.50" opacity="0.75"/><path d="M297.6 95.5H300.9M299.3 94.5V96.5" stroke="#3e3e40" stroke-width="0.44" opacity="0.75"/><path d="M-53.8 157.7H-47.8M-50.8 155.9V159.5" stroke="#3e3e40" stroke-width="0.60" opacity="0.75"/><path d="M103.9 117.4H108.2M106.0 116.1V118.7" stroke="#3e3e40" stroke-width="0.50" opacity="0.75"/><path d="M190.0 95.4H193.3M191.6 94.4V96.4" stroke="#3e3e40" stroke-width="0.44" opacity="0.75"/><path d="M-35.3 117.2H-31.1M-33.2 116.0V118.5" stroke="#3e3e40" stroke-width="0.50" opacity="0.75"/><path d="M82.4 95.3H85.6M84.0 94.3V96.3" stroke="#3e3e40" stroke-width="0.44" opacity="0.75"/><path d="M-25.3 95.2H-22.0M-23.6 94.2V96.1" stroke="#3e3e40" stroke-width="0.44" opacity="0.75"/><ellipse cx="181" cy="166" rx="28" ry="13.2" transform="rotate(-7 181 166)" fill="#2c2c2f"/><ellipse cx="213.60000000000002" cy="161.5" rx="3.4" ry="1.9" fill="#2c2c2f"/><ellipse cx="244.7" cy="68.0" rx="27" ry="25.6" fill="url(#sph2)"/><ellipse cx="244.7" cy="68.0" rx="27" ry="25.6" fill="url(#sphh)"/><ellipse cx="244.7" cy="68.0" rx="26.6" ry="25.2" fill="none" stroke="#c4c4c4" stroke-width="0.7" opacity="0.8"/><g transform="translate(-163 -42)">
<path d="M386.8 140 Q386.8 132.5 392 131.8 Q404 139 420.5 136.5 L420.5 141 L428.3 138.8 L428.3 149.5 L420.5 146.5 L420.5 151.3 Q420.5 153.2 418.5 153.2 L397 153.2 Q395 153.2 395 151.2 L395 147.3 Q386.8 147 386.8 140Z" fill="#fff" stroke="#2a2a2a" stroke-width="0.7" stroke-opacity="0.75"/>
<circle cx="408.2" cy="129.3" r="8.0" fill="#a0a0a0"/>
</g><g transform="translate(242 115.5)"><path d="M0 1L2.5 0L5 1L5 5L2.5 6L0 5Z" fill="#ededed"/><path d="M2.5 2V6M0 1L2.5 2L5 1" stroke="#9a9a9a" stroke-width="0.5" fill="none"/></g></svg>
<div class="a" style="left:164px;top:42.9px;width:12.3px;height:49px;background:rgba(22,24,30,0.9);border-radius:1.2px;border:0.5px solid #0c0c0c"></div>
<div class="a" style="left:167.5px;top:44.6px;width:5.5px;height:0.45px;background:#6a6a6a;"></div>
<div class="a" style="left:167.5px;top:45.6px;width:5.5px;height:0.45px;background:#6a6a6a;"></div>
<div class="a" style="left:165px;top:49.8px;width:10.3px;height:5.8px;background:#3d5f8a"></div>
<div class="a" style="left:165px;top:55.4px;width:10.3px;height:0.5px;background:#4a90d8;"></div>
<svg style="left:167.7px;top:50.2px" width="4.8" height="4.8" viewBox="0 0 10 10"><path d="M2 5V3.5Q2 2.6 2.9 2.6V1.5Q3 0.6 3.9 0.7Q4.5 0.1 5.4 0.6Q6.3 0.3 6.9 1V2Q8 1.9 8.1 3V6.5Q8 10 5 10Q2.6 10 1.5 7.6L0.8 6Q1 5 2 5Z" fill="#e8e8e8"/></svg>
<svg style="left:167.7px;top:56.7px" width="4.8" height="4.8" viewBox="0 0 10 10"><path d="M5 1V9M1 5H9M3.6 2.4L5 1L6.4 2.4M3.6 7.6L5 9L6.4 7.6M2.4 3.6L1 5L2.4 6.4M7.6 3.6L9 5L7.6 6.4" stroke="#a8a8a8" stroke-width="0.9" fill="none"/></svg>
<svg style="left:167.7px;top:63.9px" width="4.8" height="4.8" viewBox="0 0 10 10"><circle cx="5" cy="5" r="3.6" stroke="#a8a8a8" stroke-width="0.9" fill="none"/><path d="M1.4 3L1.4 5.2L3.4 4.4M8.6 7L8.6 4.8L6.6 5.6" fill="#a8a8a8"/></svg>
<svg style="left:167.7px;top:70.8px" width="4.8" height="4.8" viewBox="0 0 10 10"><rect x="1" y="1" width="8" height="8" stroke="#a8a8a8" stroke-width="0.9" fill="none"/><rect x="1" y="5" width="4" height="4" fill="#a8a8a8" opacity="0.6"/><path d="M4 6L8 2M5.5 2H8V4.5" stroke="#a8a8a8" stroke-width="0.9" fill="none"/></svg>
<svg style="left:167.7px;top:77.69999999999999px" width="4.8" height="4.8" viewBox="0 0 10 10"><rect x="2" y="2" width="6" height="6" stroke="#a8a8a8" stroke-width="0.9" fill="none"/><path d="M1 1h2v2h-2zM7 1h2v2h-2zM1 7h2v2h-2zM7 7h2v2h-2z" fill="#a8a8a8"/></svg>
<svg style="left:167.7px;top:84.19999999999999px" width="4.8" height="4.8" viewBox="0 0 10 10"><circle cx="5" cy="5" r="3.8" stroke="#a8a8a8" stroke-width="0.8" fill="none"/><path d="M5 2.5V7.5M2.5 5H7.5" stroke="#a8a8a8" stroke-width="0.8"/><rect x="5.6" y="5.6" width="3.4" height="3.4" fill="#a8a8a8"/></svg>
<svg style="left:618px;top:44px" width="34" height="28" viewBox="618 44 34 28">
<path d="M620 45.3H624M620 46.1H624" stroke="#6a88b8" stroke-width="0.5"/>
<path d="M632.4 57.3L630.5 57.3M639.2 57.3L641 57.3" stroke="#ddd" stroke-width="2.2" stroke-linecap="round"/>
<path d="M636 59.2L636 66" stroke="#ddd" stroke-width="2.2" stroke-linecap="round"/>
<circle cx="630.5" cy="57.3" r="1.3" fill="#e4e4e4"/><circle cx="641" cy="57.3" r="1.3" fill="#e4e4e4"/><circle cx="636" cy="66" r="1.3" fill="#e4e4e4"/>
<circle cx="635.8" cy="59.4" r="2.7" fill="#d8d8d8"/>
<path d="M634 50.1H638L636.1 56.4Z" fill="#7ad04a"/>
<path d="M627.5 60.5L633.3 60.5L629.5 65Z" fill="#d8463a"/>
<path d="M639.2 60.5H645L643 65Z" fill="#4a70e0"/>
<text x="634.6" y="48.8" font-size="3" fill="#fff" font-family="Liberation Sans">y</text>
<text x="623.6" y="65.2" font-size="3" fill="#fff" font-family="Liberation Sans">x</text>
<text x="645.5" y="65.2" font-size="3" fill="#fff" font-family="Liberation Sans">z</text>
<rect x="646" y="49" width="2.2" height="1.8" fill="#eee"/><path d="M646.4 49V48.3A0.7 0.7 0 0 1 647.8 48.3V49" stroke="#eee" stroke-width="0.4" fill="none"/>
</svg>
<div class="a" style="left:342.8px;top:221px;width:172px;height:30.5px;background:#f0f0f0;border-radius:2px;box-shadow:0 0 1.5px rgba(0,0,0,0.35)"></div>
<div class="t" style="left:346px;top:224.78px;font-size:4.6px;color:#8a8a8a;transform:scaleX(0.761);transform-origin:0 0;">Reloading Domain</div>
<div class="a" style="left:346px;top:234.6px;width:164.4px;height:5px;background:linear-gradient(90deg,#1a7a1a 0%,#1f8d1f 20%,#58c858 28%,#1f8d1f 36%,#1a881a 100%);border:0.5px solid #bcbcbc"></div>
<div class="t" style="left:347px;top:244.68px;font-size:4.6px;color:#333333;transform:scaleX(0.7134);transform-origin:0 0;">Reloading Domain</div>
<div class="a" style="left:586px;top:210.3px;width:67.5px;height:78.7px;background:rgba(22,22,22,0.94);border:0.5px solid #2a2a2a;border-radius:1px"></div>
<div class="a" style="left:588.3px;top:212.5px;width:4px;height:0.45px;background:#666;"></div>
<div class="a" style="left:588.3px;top:213.5px;width:4px;height:0.45px;background:#666;"></div>
<div class="t" style="left:594.5px;top:212.28px;font-size:4.6px;color:#9a9a9a;transform:scaleX(0.7858);transform-origin:0 0;">AI Navigation</div>
<svg style="left:588.7px;top:217.6px" width="2.4" height="1.8" viewBox="0 0 3 2"><path d="M0 0H3L1.5 2Z" fill="#9a9a9a"/></svg>
<div class="t" style="left:592.8px;top:217.68px;font-size:4.6px;color:#d6d6d6;font-weight:bold;transform:scaleX(0.7204);transform-origin:0 0;">Surfaces</div>
<div class="t" style="left:593px;top:223.58px;font-size:4.6px;color:#d8d8d8;transform:scaleX(0.9174);transform-origin:0 0;">Show Only Selected</div>
<div class="a" style="left:647.3px;top:222.4px;width:4.4px;height:4.2px;background:#2d2d2d;border-radius:0.6px"></div>
<div class="t" style="left:593px;top:229.08px;font-size:4.6px;color:#d8d8d8;transform:scaleX(0.7761);transform-origin:0 0;">Show NavMesh</div>
<div class="a" style="left:647.3px;top:227.9px;width:4.4px;height:4.2px;background:#2d2d2d;border-radius:0.6px"></div>
<svg style="left:647.6px;top:228.1px" width="3.8" height="3.6" viewBox="0 0 8 8"><path d="M1 4.2L3.2 6.5L7 1.2" stroke="#e8e8e8" stroke-width="1.4" fill="none"/></svg>
<div class="t" style="left:593px;top:234.58px;font-size:4.6px;color:#d8d8d8;transform:scaleX(0.8036);transform-origin:0 0;">Show HeightMesh</div>
<div class="a" style="left:647.3px;top:233.4px;width:4.4px;height:4.2px;background:#2d2d2d;border-radius:0.6px"></div>
<div class="t" style="left:593px;top:248.08px;font-size:4.6px;color:#d8d8d8;transform:scaleX(0.8598);transform-origin:0 0;">Show Path Polygons</div>
<div class="a" style="left:647.3px;top:246.9px;width:4.4px;height:4.2px;background:#2d2d2d;border-radius:0.6px"></div>
<svg style="left:647.6px;top:247.1px" width="3.8" height="3.6" viewBox="0 0 8 8"><path d="M1 4.2L3.2 6.5L7 1.2" stroke="#e8e8e8" stroke-width="1.4" fill="none"/></svg>
<div class="t" style="left:593px;top:253.58px;font-size:4.6px;color:#d8d8d8;transform:scaleX(0.8493);transform-origin:0 0;">Show Path Query Nodes</div>
<div class="a" style="left:647.3px;top:252.4px;width:4.4px;height:4.2px;background:#2d2d2d;border-radius:0.6px"></div>
<div class="t" style="left:593px;top:259.08px;font-size:4.6px;color:#d8d8d8;transform:scaleX(0.8537);transform-origin:0 0;">Show Neighbours</div>
<div class="a" style="left:647.3px;top:257.9px;width:4.4px;height:4.2px;background:#2d2d2d;border-radius:0.6px"></div>
<div class="t" style="left:593px;top:264.58px;font-size:4.6px;color:#d8d8d8;transform:scaleX(0.8592);transform-origin:0 0;">Show Walls</div>
<div class="a" style="left:647.3px;top:263.4px;width:4.4px;height:4.2px;background:#2d2d2d;border-radius:0.6px"></div>
<div class="t" style="left:593px;top:270.08px;font-size:4.6px;color:#d8d8d8;transform:scaleX(0.8547);transform-origin:0 0;">Show Avoidance</div>
<div class="a" style="left:647.3px;top:268.9px;width:4.4px;height:4.2px;background:#2d2d2d;border-radius:0.6px"></div>
<div class="t" style="left:593px;top:283.58px;font-size:4.6px;color:#d8d8d8;transform:scaleX(0.8173);transform-origin:0 0;">Show Carve Hull</div>
<div class="a" style="left:647.3px;top:282.4px;width:4.4px;height:4.2px;background:#2d2d2d;border-radius:0.6px"></div>
<svg style="left:588.7px;top:242.1px" width="2.4" height="1.8" viewBox="0 0 3 2"><path d="M0 0H3L1.5 2Z" fill="#9a9a9a"/></svg>
<div class="t" style="left:592.8px;top:242.18px;font-size:4.6px;color:#d6d6d6;font-weight:bold;transform:scaleX(0.7376);transform-origin:0 0;">Agents</div>
<svg style="left:588.7px;top:277.1px" width="2.4" height="1.8" viewBox="0 0 3 2"><path d="M0 0H3L1.5 2Z" fill="#9a9a9a"/></svg>
<div class="t" style="left:592.8px;top:277.18px;font-size:4.6px;color:#d6d6d6;font-weight:bold;transform:scaleX(0.7049);transform-origin:0 0;">Obstacles</div>
<div class="a" style="left:0px;top:289.5px;width:656px;height:1.5px;background:#191919;"></div>
<div class="a" style="left:0px;top:291px;width:656px;height:6px;background:#282828;"></div>
<div class="a" style="left:1px;top:291px;width:26px;height:6px;background:#333333;"></div>
<div class="a" style="left:1px;top:290.9px;width:26px;height:0.6px;background:#35679c;"></div>
<div class="a" style="left:3px;top:292.8px;width:3.6px;height:2.8px;background:#c8c8c8;border-radius:0.3px"></div>
<div class="t" style="left:8px;top:293.48px;font-size:4.6px;color:#a8a8a8;transform:scaleX(0.922);transform-origin:0 0;">Project</div>
<div class="a" style="left:30px;top:292.3px;width:3.4px;height:3.6px;border:0.7px solid #d0d0d0;border-radius:0.5px;background:linear-gradient(#0000 45%,#d0d0d0 45% 60%,#0000 60%)"></div>
<div class="t" style="left:35px;top:293.48px;font-size:4.6px;color:#d0d0d0;transform:scaleX(0.9598);transform-origin:0 0;">Console</div>
<div class="a" style="left:643.3px;top:292.7px;width:2.6px;height:2.6px;border-radius:1px 1px 0 0;background:#bbb"></div>
<div class="a" style="left:649.6px;top:292.4px;width:0.9px;height:3.2px;background:#bbb;"></div>
<div class="a" style="left:0px;top:297px;width:654px;height:6.5px;background:#3c3c3c;"></div>
<svg style="left:2.4px;top:298.4px" width="4.6" height="4.6" viewBox="0 0 9 9"><path d="M4.5 0V9M0 4.5H9" stroke="#ececec" stroke-width="2.6"/></svg>
<svg style="left:8.4px;top:300.2px" width="2.4" height="1.8" viewBox="0 0 3 2"><path d="M0 0H3L1.5 2Z" fill="#ddd"/></svg>
<div class="a" style="left:497.4px;top:297.6px;width:100px;height:5.6px;background:#2a2a2a;border-radius:1.5px"></div>
<div class="a" style="left:499.6px;top:299.2px;width:2px;height:2px;border-radius:50%;border:0.5px solid #bbb"></div>
<svg style="left:599.0px;top:298.3px" width="4.6" height="4.6" viewBox="0 0 10 10"><rect x="1.5" y="1.5" width="7" height="3" rx="0.8" fill="#b0b0b0"/><rect x="1.5" y="5.5" width="7" height="3" rx="0.8" fill="#b0b0b0"/></svg>
<svg style="left:607.0px;top:298.3px" width="4.6" height="4.6" viewBox="0 0 10 10"><circle cx="5" cy="2.6" r="2" fill="#c8c8c8"/><rect x="1" y="5.6" width="3.4" height="3.4" fill="#c8c8c8"/><path d="M6.8 5.4L9.2 9H4.6Z" fill="#c8c8c8"/></svg>
<svg style="left:615.8000000000001px;top:298.3px" width="4.6" height="4.6" viewBox="0 0 10 10"><path d="M2 6.5L6 2.5Q7 1.5 8 2.5Q9 3.5 8 4.5L4 8.5Q3 9.5 2 8.5Q1 7.5 2 6.5Z" fill="#c8c8c8"/></svg>
<svg style="left:624.7px;top:298.1px" width="5" height="5" viewBox="0 0 10 10"><circle cx="5" cy="5" r="4.3" fill="#dcdcdc"/><rect x="4.4" y="2.6" width="1.2" height="3.6" fill="#555"/><rect x="4.4" y="6.8" width="1.2" height="1" fill="#555"/></svg>
<svg style="left:634.3px;top:298.6px" width="4" height="4" viewBox="0 0 10 10"><path d="M5 1L6.2 3.8L9.2 4L6.9 6L7.6 9L5 7.4L2.4 9L3.1 6L0.8 4L3.8 3.8Z" fill="#7a7a7a"/></svg>
<svg style="left:641.3000000000001px;top:298.3px" width="4.6" height="4.6" viewBox="0 0 10 10"><path d="M0.8 5Q5 0.8 9.2 5Q5 9.2 0.8 5Z" fill="#b8b8b8"/><path d="M1.5 9L8.5 1" stroke="#3c3c3c" stroke-width="1.2"/><path d="M1.5 9L8.5 1" stroke="#b8b8b8" stroke-width="0.5"/></svg>
<div class="t" style="left:646.6px;top:299.88px;font-size:4.6px;color:#a0a0a0;transform:scaleX(0.9772);transform-origin:0 0;">23</div>
<div class="a" style="left:0px;top:303.5px;width:65.5px;height:168.5px;background:#383838;"></div>
<div class="a" style="left:65.5px;top:303.5px;width:4.5px;height:168.5px;background:#2e2e2e;"></div>
<div class="a" style="left:66.5px;top:310.5px;width:2.6px;height:139.5px;background:#5c5c5c;border-radius:1.3px"></div>
<svg style="left:66.4px;top:305.8px" width="2.6" height="1.8" viewBox="0 0 3 2"><path d="M0 2H3L1.5 0Z" fill="#bbb"/></svg>
<svg style="left:66.4px;top:466.5px" width="2.6" height="1.8" viewBox="0 0 3 2"><path d="M0 0H3L1.5 2Z" fill="#bbb"/></svg>
<div class="a" style="left:0px;top:336.5px;width:65.5px;height:5.3px;background:#4b4b4b;"></div>
<svg style="left:2.4px;top:306.09999999999997px" width="2.2" height="1.6" viewBox="0 0 3 2"><path d="M0 0H3L1.5 2Z" fill="#9a9a9a"/></svg>
<svg style="left:6.5px;top:304.8px" width="4.2" height="4.2" viewBox="0 0 10 10"><path d="M5 0.5L6.3 3.6L9.7 3.8L7.1 6L8 9.4L5 7.5L2 9.4L2.9 6L0.3 3.8L3.7 3.6Z" fill="#d8d8d8"/></svg>
<div class="t" style="left:11.9px;top:305.98px;font-size:4.6px;color:#d8d8d8;font-weight:bold;transform:scaleX(0.8849);transform-origin:0 0;">Favorites</div>
<svg style="left:11.4px;top:310.1px" width="4.2" height="4.2" viewBox="0 0 10 10"><circle cx="4" cy="4" r="2.9" fill="none" stroke="#c8c8c8" stroke-width="1.3"/><path d="M6.2 6.2L9.2 9.2" stroke="#c8c8c8" stroke-width="1.6"/></svg>
<div class="t" style="left:16.2px;top:311.38px;font-size:4.6px;color:#c8c8c8;transform:scaleX(0.9341);transform-origin:0 0;">All Materials</div>
<svg style="left:11.4px;top:315.5px" width="4.2" height="4.2" viewBox="0 0 10 10"><circle cx="4" cy="4" r="2.9" fill="none" stroke="#c8c8c8" stroke-width="1.3"/><path d="M6.2 6.2L9.2 9.2" stroke="#c8c8c8" stroke-width="1.6"/></svg>
<div class="t" style="left:16.2px;top:316.78px;font-size:4.6px;color:#c8c8c8;transform:scaleX(0.9803);transform-origin:0 0;">All Models</div>
<svg style="left:11.4px;top:321.1px" width="4.2" height="4.2" viewBox="0 0 10 10"><circle cx="4" cy="4" r="2.9" fill="none" stroke="#c8c8c8" stroke-width="1.3"/><path d="M6.2 6.2L9.2 9.2" stroke="#c8c8c8" stroke-width="1.6"/></svg>
<div class="t" style="left:16.2px;top:322.38px;font-size:4.6px;color:#c8c8c8;transform:scaleX(0.9711);transform-origin:0 0;">All Prefabs</div>
<svg style="left:2.4px;top:332.7px" width="2.2" height="1.6" viewBox="0 0 3 2"><path d="M0 0H3L1.5 2Z" fill="#9a9a9a"/></svg>
<svg style="left:6px;top:331.7px" width="4.4" height="3.6" viewBox="0 0 9 7"><path d="M0 0H3.5L4.5 1H9V7H0Z" fill="#dcdcdc"/></svg>
<div class="t" style="left:12px;top:332.58px;font-size:4.6px;color:#d8d8d8;font-weight:bold;transform:scaleX(0.9279);transform-origin:0 0;">Assets</div>
<svg style="left:10.6px;top:337.3px" width="4.4" height="3.6" viewBox="0 0 9 7"><path d="M0 0H3.5L4.5 1H9V7H0Z" fill="#dcdcdc"/></svg>
<div class="t" style="left:16.2px;top:338.18px;font-size:4.6px;color:#d8d8d8;transform:scaleX(0.9831);transform-origin:0 0;">On-Off-an-Object</div>
<svg style="left:7px;top:343.29999999999995px" width="1.6" height="2.2" viewBox="0 0 2 3"><path d="M0 0V3L2 1.5Z" fill="#8a8a8a"/></svg>
<svg style="left:10.6px;top:342.59999999999997px" width="4.4" height="3.6" viewBox="0 0 9 7"><path d="M0 0H3.5L4.5 1H9V7H0Z" fill="#dcdcdc"/></svg>
<div class="t" style="left:16.2px;top:343.48px;font-size:4.6px;color:#d8d8d8;transform:scaleX(0.9516);transform-origin:0 0;">Scenes</div>
<svg style="left:10.6px;top:348.0px" width="4.4" height="3.6" viewBox="0 0 9 7"><path d="M0 0H3.5L4.5 1H9V7H0Z" fill="#dcdcdc"/></svg>
<div class="t" style="left:16.2px;top:348.88px;font-size:4.6px;color:#d8d8d8;transform:scaleX(0.9152);transform-origin:0 0;">SerializedUdonPrograms</div>
<svg style="left:7px;top:354.09999999999997px" width="1.6" height="2.2" viewBox="0 0 2 3"><path d="M0 0V3L2 1.5Z" fill="#8a8a8a"/></svg>
<svg style="left:10.6px;top:353.4px" width="4.4" height="3.6" viewBox="0 0 9 7"><path d="M0 0H3.5L4.5 1H9V7H0Z" fill="#dcdcdc"/></svg>
<div class="t" style="left:16.2px;top:354.28px;font-size:4.6px;color:#d8d8d8;transform:scaleX(0.9367);transform-origin:0 0;">UdonSharp</div>
<svg style="left:7px;top:359.5px" width="1.6" height="2.2" viewBox="0 0 2 3"><path d="M0 0V3L2 1.5Z" fill="#8a8a8a"/></svg>
<svg style="left:10.6px;top:358.8px" width="4.4" height="3.6" viewBox="0 0 9 7"><path d="M0 0H3.5L4.5 1H9V7H0Z" fill="#dcdcdc"/></svg>
<div class="t" style="left:16.2px;top:359.68px;font-size:4.6px;color:#d8d8d8;transform:scaleX(0.9076);transform-origin:0 0;">XR</div>
<svg style="left:2.4px;top:365.2px" width="2.2" height="1.6" viewBox="0 0 3 2"><path d="M0 0H3L1.5 2Z" fill="#9a9a9a"/></svg>
<svg style="left:6px;top:364.2px" width="4.4" height="3.6" viewBox="0 0 9 7"><path d="M0 0H3.5L4.5 1H9V7H0Z" fill="#dcdcdc"/></svg>
<div class="t" style="left:12px;top:365.08px;font-size:4.6px;color:#d8d8d8;font-weight:bold;transform:scaleX(0.9186);transform-origin:0 0;">Packages</div>
<svg style="left:7px;top:370.2px" width="1.6" height="2.2" viewBox="0 0 2 3"><path d="M0 0V3L2 1.5Z" fill="#8a8a8a"/></svg>
<svg style="left:10.6px;top:369.5px" width="4.4" height="3.6" viewBox="0 0 9 7"><path d="M0 0H3.5L4.5 1H9V7H0Z" fill="#dcdcdc"/></svg>
<div class="t" style="left:16.2px;top:370.38px;font-size:4.6px;color:#d8d8d8;transform:scaleX(0.9247);transform-origin:0 0;">AI Navigation</div>
<svg style="left:7px;top:375.567px" width="1.6" height="2.2" viewBox="0 0 2 3"><path d="M0 0V3L2 1.5Z" fill="#8a8a8a"/></svg>
<svg style="left:10.6px;top:374.867px" width="4.4" height="3.6" viewBox="0 0 9 7"><path d="M0 0H3.5L4.5 1H9V7H0Z" fill="#dcdcdc"/></svg>
<div class="t" style="left:16.2px;top:375.75px;font-size:4.6px;color:#d8d8d8;transform:scaleX(0.9314);transform-origin:0 0;">Burst</div>
<svg style="left:7px;top:380.93399999999997px" width="1.6" height="2.2" viewBox="0 0 2 3"><path d="M0 0V3L2 1.5Z" fill="#8a8a8a"/></svg>
<svg style="left:10.6px;top:380.234px" width="4.4" height="3.6" viewBox="0 0 9 7"><path d="M0 0H3.5L4.5 1H9V7H0Z" fill="#dcdcdc"/></svg>
<div class="t" style="left:16.2px;top:381.11px;font-size:4.6px;color:#d8d8d8;transform:scaleX(0.9237);transform-origin:0 0;">Cinemachine</div>
<svg style="left:7px;top:386.301px" width="1.6" height="2.2" viewBox="0 0 2 3"><path d="M0 0V3L2 1.5Z" fill="#8a8a8a"/></svg>
<svg style="left:10.6px;top:385.601px" width="4.4" height="3.6" viewBox="0 0 9 7"><path d="M0 0H3.5L4.5 1H9V7H0Z" fill="#dcdcdc"/></svg>
<div class="t" style="left:16.2px;top:386.48px;font-size:4.6px;color:#d8d8d8;transform:scaleX(0.9556);transform-origin:0 0;">Collections</div>
<svg style="left:7px;top:391.668px" width="1.6" height="2.2" viewBox="0 0 2 3"><path d="M0 0V3L2 1.5Z" fill="#8a8a8a"/></svg>
<svg style="left:10.6px;top:390.968px" width="4.4" height="3.6" viewBox="0 0 9 7"><path d="M0 0H3.5L4.5 1H9V7H0Z" fill="#dcdcdc"/></svg>
<div class="t" style="left:16.2px;top:391.85px;font-size:4.6px;color:#d8d8d8;transform:scaleX(0.9256);transform-origin:0 0;">Custom NUnit</div>
<svg style="left:7px;top:397.03499999999997px" width="1.6" height="2.2" viewBox="0 0 2 3"><path d="M0 0V3L2 1.5Z" fill="#8a8a8a"/></svg>
<svg style="left:10.6px;top:396.335px" width="4.4" height="3.6" viewBox="0 0 9 7"><path d="M0 0H3.5L4.5 1H9V7H0Z" fill="#dcdcdc"/></svg>
<div class="t" style="left:16.2px;top:397.21px;font-size:4.6px;color:#d8d8d8;transform:scaleX(0.9238);transform-origin:0 0;">Input System</div>
<svg style="left:7px;top:402.402px" width="1.6" height="2.2" viewBox="0 0 2 3"><path d="M0 0V3L2 1.5Z" fill="#8a8a8a"/></svg>
<svg style="left:10.6px;top:401.702px" width="4.4" height="3.6" viewBox="0 0 9 7"><path d="M0 0H3.5L4.5 1H9V7H0Z" fill="#dcdcdc"/></svg>
<div class="t" style="left:16.2px;top:402.58px;font-size:4.6px;color:#d8d8d8;transform:scaleX(0.9097);transform-origin:0 0;">JetBrains Rider Editor</div>
<svg style="left:7px;top:407.769px" width="1.6" height="2.2" viewBox="0 0 2 3"><path d="M0 0V3L2 1.5Z" fill="#8a8a8a"/></svg>
<svg style="left:10.6px;top:407.069px" width="4.4" height="3.6" viewBox="0 0 9 7"><path d="M0 0H3.5L4.5 1H9V7H0Z" fill="#dcdcdc"/></svg>
<div class="t" style="left:16.2px;top:407.95px;font-size:4.6px;color:#d8d8d8;transform:scaleX(0.9357);transform-origin:0 0;">Mathematics</div>
<svg style="left:7px;top:413.13599999999997px" width="1.6" height="2.2" viewBox="0 0 2 3"><path d="M0 0V3L2 1.5Z" fill="#8a8a8a"/></svg>
<svg style="left:10.6px;top:412.436px" width="4.4" height="3.6" viewBox="0 0 9 7"><path d="M0 0H3.5L4.5 1H9V7H0Z" fill="#dcdcdc"/></svg>
<div class="t" style="left:16.2px;top:413.32px;font-size:4.6px;color:#d8d8d8;transform:scaleX(0.9344);transform-origin:0 0;">Mono Cecil</div>
<svg style="left:7px;top:418.503px" width="1.6" height="2.2" viewBox="0 0 2 3"><path d="M0 0V3L2 1.5Z" fill="#8a8a8a"/></svg>
<svg style="left:10.6px;top:417.803px" width="4.4" height="3.6" viewBox="0 0 9 7"><path d="M0 0H3.5L4.5 1H9V7H0Z" fill="#dcdcdc"/></svg>
<div class="t" style="left:16.2px;top:418.68px;font-size:4.6px;color:#d8d8d8;transform:scaleX(0.9498);transform-origin:0 0;">Newtonsoft Json</div>
<svg style="left:7px;top:423.87px" width="1.6" height="2.2" viewBox="0 0 2 3"><path d="M0 0V3L2 1.5Z" fill="#8a8a8a"/></svg>
<svg style="left:10.6px;top:423.17px" width="4.4" height="3.6" viewBox="0 0 9 7"><path d="M0 0H3.5L4.5 1H9V7H0Z" fill="#dcdcdc"/></svg>
<div class="t" style="left:16.2px;top:424.05px;font-size:4.6px;color:#d8d8d8;transform:scaleX(0.9043);transform-origin:0 0;">Oculus XR Plugin</div>
<svg style="left:7px;top:429.23699999999997px" width="1.6" height="2.2" viewBox="0 0 2 3"><path d="M0 0V3L2 1.5Z" fill="#8a8a8a"/></svg>
<svg style="left:10.6px;top:428.537px" width="4.4" height="3.6" viewBox="0 0 9 7"><path d="M0 0H3.5L4.5 1H9V7H0Z" fill="#dcdcdc"/></svg>
<div class="t" style="left:16.2px;top:429.42px;font-size:4.6px;color:#d8d8d8;transform:scaleX(0.9236);transform-origin:0 0;">Post Processing</div>
<svg style="left:7px;top:434.604px" width="1.6" height="2.2" viewBox="0 0 2 3"><path d="M0 0V3L2 1.5Z" fill="#8a8a8a"/></svg>
<svg style="left:10.6px;top:433.904px" width="4.4" height="3.6" viewBox="0 0 9 7"><path d="M0 0H3.5L4.5 1H9V7H0Z" fill="#dcdcdc"/></svg>
<div class="t" style="left:16.2px;top:434.78px;font-size:4.6px;color:#d8d8d8;transform:scaleX(0.9261);transform-origin:0 0;">Test Framework</div>
<svg style="left:7px;top:439.971px" width="1.6" height="2.2" viewBox="0 0 2 3"><path d="M0 0V3L2 1.5Z" fill="#8a8a8a"/></svg>
<svg style="left:10.6px;top:439.271px" width="4.4" height="3.6" viewBox="0 0 9 7"><path d="M0 0H3.5L4.5 1H9V7H0Z" fill="#dcdcdc"/></svg>
<div class="t" style="left:16.2px;top:440.15px;font-size:4.6px;color:#d8d8d8;transform:scaleX(0.9351);transform-origin:0 0;">TextMeshPro</div>
<svg style="left:7px;top:445.33799999999997px" width="1.6" height="2.2" viewBox="0 0 2 3"><path d="M0 0V3L2 1.5Z" fill="#8a8a8a"/></svg>
<svg style="left:10.6px;top:444.638px" width="4.4" height="3.6" viewBox="0 0 9 7"><path d="M0 0H3.5L4.5 1H9V7H0Z" fill="#dcdcdc"/></svg>
<div class="t" style="left:16.2px;top:445.52px;font-size:4.6px;color:#d8d8d8;transform:scaleX(0.947);transform-origin:0 0;">Timeline</div>
<svg style="left:7px;top:450.705px" width="1.6" height="2.2" viewBox="0 0 2 3"><path d="M0 0V3L2 1.5Z" fill="#8a8a8a"/></svg>
<svg style="left:10.6px;top:450.005px" width="4.4" height="3.6" viewBox="0 0 9 7"><path d="M0 0H3.5L4.5 1H9V7H0Z" fill="#dcdcdc"/></svg>
<div class="t" style="left:16.2px;top:450.88px;font-size:4.6px;color:#d8d8d8;transform:scaleX(0.9658);transform-origin:0 0;">Unity UI</div>
<svg style="left:7px;top:456.072px" width="1.6" height="2.2" viewBox="0 0 2 3"><path d="M0 0V3L2 1.5Z" fill="#8a8a8a"/></svg>
<svg style="left:10.6px;top:455.372px" width="4.4" height="3.6" viewBox="0 0 9 7"><path d="M0 0H3.5L4.5 1H9V7H0Z" fill="#dcdcdc"/></svg>
<div class="t" style="left:16.2px;top:456.25px;font-size:4.6px;color:#d8d8d8;transform:scaleX(0.9133);transform-origin:0 0;">Visual Studio Code Editor</div>
<svg style="left:7px;top:461.43899999999996px" width="1.6" height="2.2" viewBox="0 0 2 3"><path d="M0 0V3L2 1.5Z" fill="#8a8a8a"/></svg>
<svg style="left:10.6px;top:460.739px" width="4.4" height="3.6" viewBox="0 0 9 7"><path d="M0 0H3.5L4.5 1H9V7H0Z" fill="#dcdcdc"/></svg>
<div class="t" style="left:16.2px;top:461.62px;font-size:4.6px;color:#d8d8d8;transform:scaleX(0.9111);transform-origin:0 0;">Visual Studio Editor</div>
<svg style="left:7px;top:466.806px" width="1.6" height="2.2" viewBox="0 0 2 3"><path d="M0 0V3L2 1.5Z" fill="#8a8a8a"/></svg>
<svg style="left:10.6px;top:466.106px" width="4.4" height="3.6" viewBox="0 0 9 7"><path d="M0 0H3.5L4.5 1H9V7H0Z" fill="#dcdcdc"/></svg>
<div class="t" style="left:16.2px;top:466.99px;font-size:4.6px;color:#d8d8d8;transform:scaleX(0.9101);transform-origin:0 0;">VRChat Package Resolve</div>
<svg style="left:7px;top:472.173px" width="1.6" height="2.2" viewBox="0 0 2 3"><path d="M0 0V3L2 1.5Z" fill="#8a8a8a"/></svg>
<svg style="left:10.6px;top:471.473px" width="4.4" height="3.6" viewBox="0 0 9 7"><path d="M0 0H3.5L4.5 1H9V7H0Z" fill="#dcdcdc"/></svg>
<div class="t" style="left:16.2px;top:472.35px;font-size:4.6px;color:#d8d8d8;transform:scaleX(0.8846);transform-origin:0 0;">VRChat Package Resolver</div>
<div class="a" style="left:70px;top:303.5px;width:584px;height:7.7px;background:#3a3a3a;"></div>
<div class="t" style="left:71.5px;top:306.68px;font-size:4.6px;color:#9a9a9a;transform:scaleX(0.8548);transform-origin:0 0;">Assets</div>
<svg style="left:86.2px;top:306.2px" width="1.6" height="2.6" viewBox="0 0 2 3"><path d="M0 0L2 1.5L0 3" stroke="#888" stroke-width="0.5" fill="none"/></svg>
<div class="t" style="left:89.8px;top:306.68px;font-size:4.6px;color:#d4d4d4;font-weight:bold;transform:scaleX(0.9435);transform-origin:0 0;">On-Off-an-Object</div>
<div class="a" style="left:70px;top:311.2px;width:584px;height:153.6px;background:#333333;"></div>
<svg style="left:76px;top:315px" width="20" height="21" viewBox="0 0 20 21">
<path d="M1.8 0.6H14.3L19 5.3V18.6Q19 20.3 17.3 20.3H1.8Q0.6 20.3 0.6 18.6V2.3Q0.6 0.6 1.8 0.6Z" fill="#dfe6f2" stroke="#141414" stroke-width="0.9"/>
<path d="M8.4 5.2L7.2 16.2M12.4 5.2L11.2 16.2M5.6 8.7H15M5.2 12.7H14.6" stroke="#17701c" stroke-width="1.3"/>
</svg>
<div class="a" style="left:74px;top:336.5px;width:23.5px;height:4.8px;background:#2c5d87;border-radius:1px"></div>
<div class="t" style="left:75.2px;top:337.98px;font-size:4.6px;color:#e0e0e0;transform:scaleX(0.8498);transform-origin:0 0;">OnOffSwit...</div>
<div class="a" style="left:70px;top:464.8px;width:584px;height:7.4px;background:#3a3a3a;"></div>
<div class="a" style="left:71.8px;top:466.4px;width:3.2px;height:4.4px;background:#e8e8e8;border-radius:0.3px"></div>
<div class="a" style="left:72.6px;top:467.6px;width:1.6px;height:1.8px;background:#2a8a2a;"></div>
<div class="t" style="left:77px;top:467.68px;font-size:4.6px;color:#d0d0d0;transform:scaleX(0.9451);transform-origin:0 0;">Assets/On-Off-an-Object/OnOffSwitch.cs</div>
<div class="a" style="left:631px;top:468.8px;width:18px;height:0.6px;background:#5a5a5a;"></div>
<div class="a" style="left:639.8px;top:467.2px;width:3.4px;height:3.4px;border-radius:50%;background:#c8c8c8"></div>
<div class="a" style="left:654px;top:303.5px;width:1.6px;height:168.5px;background:#2a2a2a;"></div>
<div class="a" style="left:0px;top:472.2px;width:858px;height:7.8px;background:#1e1e1e;"></div>
<div class="a" style="left:1.4px;top:474px;width:4px;height:4px;border-radius:50%;background:#e8e8e8"></div>
<div class="a" style="left:3.1px;top:474.8px;width:0.6px;height:1.6px;background:#222;"></div>
<div class="a" style="left:3.1px;top:476.8px;width:0.6px;height:0.6px;background:#222;"></div>
<div class="t" style="left:7.2px;top:475.38px;font-size:4.6px;color:#c8c8c8;transform:scaleX(0.9385);transform-origin:0 0;">[</div>
<div class="t" style="left:8.6px;top:475.38px;font-size:4.6px;color:#3aa83a;transform:scaleX(0.8508);transform-origin:0 0;">UdonSharp</div>
<div class="t" style="left:28.8px;top:475.38px;font-size:4.6px;color:#d0d0d0;transform:scaleX(0.9345);transform-origin:0 0;">] Compile of 8 scripts finished in 00:00:087</div>
<svg style="left:824.6px;top:473.9px" width="4.6" height="4.6" viewBox="0 0 10 10"><path d="M1 8.5L5 1.5L9 8.5Z" fill="none" stroke="#d0d0d0" stroke-width="1.2"/><circle cx="5" cy="6" r="1.6" fill="#d0d0d0"/></svg>
<svg style="left:833.1px;top:473.9px" width="4.6" height="4.6" viewBox="0 0 10 10"><rect x="1.8" y="1" width="6.4" height="8" rx="1" fill="#c8c8c8"/><path d="M2 4H8M2 6.5H8" stroke="#333" stroke-width="0.7"/></svg>
<svg style="left:841.6px;top:473.9px" width="4.6" height="4.6" viewBox="0 0 10 10"><circle cx="5" cy="5" r="3.2" fill="none" stroke="#d0d0d0" stroke-width="1.3"/><path d="M5 0.5V2.5M5 7.5V9.5M0.5 5H2.5M7.5 5H9.5" stroke="#d0d0d0" stroke-width="1.1"/></svg>
<svg style="left:850.1px;top:473.9px" width="4.6" height="4.6" viewBox="0 0 10 10"><circle cx="5" cy="5" r="3.9" fill="none" stroke="#d0d0d0" stroke-width="1.1"/><path d="M3 5H7M5.5 3.5L7 5L5.5 6.5" stroke="#d0d0d0" stroke-width="1" fill="none"/></svg>
<div class="a" style="left:656px;top:33px;width:200px;height:439.2px;background:#383838;"></div>
<div class="a" style="left:856px;top:27px;width:2px;height:445px;background:#191919;"></div>
<div class="a" style="left:656px;top:27px;width:30.5px;height:6px;background:#3c3c3c;"></div>
<div class="a" style="left:658.3px;top:28.6px;width:2.9px;height:2.9px;border-radius:50%;background:#c0c0c0"></div>
<div class="t" style="left:663px;top:29.28px;font-size:4.6px;color:#c8c8c8;transform:scaleX(0.9777);transform-origin:0 0;">Inspector</div>
<div class="a" style="left:845.5px;top:28.7px;width:2.6px;height:2.6px;border-radius:1px 1px 0 0;background:#bbb"></div>
<div class="a" style="left:852.2px;top:28.5px;width:0.9px;height:3.2px;background:#bbb;"></div>
<div class="a" style="left:656px;top:33px;width:200px;height:20.3px;background:#3e3e3e;"></div>
<svg style="left:658.8px;top:36.3px" width="9.6" height="10.7" viewBox="0 0 10 11">
<path d="M1 0.4H7L9.6 3V10Q9.6 10.6 9 10.6H1Q0.4 10.6 0.4 10V1Q0.4 0.4 1 0.4Z" fill="#eef0f2" stroke="#111" stroke-width="0.8"/>
<path d="M4.3 3L3.9 8.4M6.3 3L5.9 8.4M2.8 4.6H7.6M2.6 6.7H7.4" stroke="#2f8a3a" stroke-width="0.8"/>
</svg>
<svg style="left:667.3px;top:46.2px" width="1.8" height="1.3" viewBox="0 0 3 2"><path d="M0 0H3L1.5 2Z" fill="#ccc"/></svg>
<div class="t" style="left:670.5px;top:37.24px;font-size:4.811px;color:#a4a4a4;">On Off Switch (Mono Script) Import Settings</div>
<div class="a" style="left:847.8px;top:36.4px;width:3.4px;height:3.4px;border-radius:50%;background:#c8c8c8"></div>
<div class="a" style="left:853.6px;top:36.4px;width:0.9px;height:3.2px;background:#bbb;"></div>
<div class="a" style="left:804px;top:43px;width:13.4px;height:5.7px;background:#4a4a4a;border-radius:0.8px"></div>
<div class="t" style="left:805.8px;top:44.98px;font-size:4.6px;color:#d0d0d0;transform:scaleX(0.8531);transform-origin:0 0;">Open</div>
<div class="a" style="left:819px;top:43px;width:36.8px;height:5.7px;background:#4a4a4a;border-radius:0.8px"></div>
<div class="t" style="left:820.5px;top:44.98px;font-size:4.6px;color:#d0d0d0;transform:scaleX(0.918);transform-origin:0 0;">Execution Order...</div>
<div class="a" style="left:656px;top:53.3px;width:200px;height:0.6px;background:#2a2a2a;"></div>
<div class="t" style="left:661.4px;top:56.38px;font-size:4.6px;color:#c8c8c8;transform:scaleX(0.9129);transform-origin:0 0;">Udon Sharp Backing Udon Behaviour</div>
<div class="a" style="left:738.8px;top:54.5px;width:117px;height:5.8px;background:#2a2a2a;border-radius:0.8px"></div>
<div class="t" style="left:741px;top:56.48px;font-size:4.6px;color:#d8d8d8;transform:scaleX(0.9063);transform-origin:0 0;">None (Udon Behaviour)</div>
<div class="a" style="left:851.2px;top:55.6px;width:3.6px;height:3.6px;border-radius:50%;background:#8a8a8a"></div>
<div class="a" style="left:661.4px;top:61.3px;width:194.6px;height:11px;background:#404040;border-radius:1px"></div>
<svg style="left:662.4px;top:62.3px" width="10" height="9.4" viewBox="0 0 20 19"><path d="M10 0.6A8.6 8.4 0 1 0 16.5 14.6L18.4 18.2L13.8 16.8A8.6 8.4 0 0 0 10 0.6Z" fill="#f0f0f0" stroke="#111" stroke-width="1.1"/><rect x="8.7" y="4" width="2.6" height="7" rx="1" fill="#222"/><circle cx="10" cy="13.8" r="1.4" fill="#222"/></svg>
<div class="t" style="left:673.3px;top:66.58px;font-size:4.6px;color:#b8b8b8;transform:scaleX(0.7964);transform-origin:0 0;">Default references will only be applied in edit mode.</div>
<div class="a" style="left:656px;top:84px;width:200px;height:8.3px;background:#333333;"></div>
<div class="t" style="left:656.6px;top:87.28px;font-size:4.6px;color:#d4d4d4;transform:scaleX(0.7884);transform-origin:0 0;">Imported Object</div>
<div class="a" style="left:656px;top:92.3px;width:200px;height:19.2px;background:#3e3e3e;"></div>
<div class="a" style="left:656px;top:91.9px;width:200px;height:0.5px;background:#2a2a2a;"></div>
<svg style="left:658.2px;top:94.4px" width="9.2" height="10.5" viewBox="0 0 10 11">
<path d="M1 0.4H7L9.6 3V10Q9.6 10.6 9 10.6H1Q0.4 10.6 0.4 10V1Q0.4 0.4 1 0.4Z" fill="#eef0f2" stroke="#111" stroke-width="0.8"/>
<path d="M4.3 3L3.9 8.4M6.3 3L5.9 8.4M2.8 4.6H7.6M2.6 6.7H7.4" stroke="#2f8a3a" stroke-width="0.8"/>
</svg>
<div class="t" style="left:670.5px;top:96.24px;font-size:4.811px;color:#a4a4a4;">On Off Switch (Mono Script)</div>
<div class="a" style="left:847.8px;top:95.2px;width:3.4px;height:3.4px;border-radius:50%;background:#c8c8c8"></div>
<div class="a" style="left:853.6px;top:95.2px;width:0.9px;height:3.2px;background:#bbb;"></div>
<div class="a" style="left:656px;top:111.5px;width:200px;height:0.6px;background:#2a2a2a;"></div>
<div class="t" style="left:661.4px;top:114.28px;font-size:4.6px;color:#dcdcdc;font-weight:bold;transform:scaleX(0.9025);transform-origin:0 0;">Assembly Information</div>
<div class="t" style="left:661.4px;top:120.68px;font-size:4.6px;color:#c8c8c8;transform:scaleX(0.9303);transform-origin:0 0;">Filename</div>
<div class="t" style="left:739.8px;top:120.68px;font-size:4.6px;color:#c8c8c8;transform:scaleX(0.9314);transform-origin:0 0;">Assembly-CSharp.dll</div>
<div class="a" style="left:656px;top:125.5px;width:200px;height:1.5px;background:#333333;"></div>
<div class="a" style="left:656px;top:127px;width:200px;height:71px;background:#3a3a3a;"></div>
<div class="a" style="left:656px;top:197.8px;width:200px;height:0.6px;background:#2c2c2c;"></div>
<div class="t" style="left:656.2px;top:133.48px;font-size:4.6px;color:#d0d0d0;transform:scaleX(0.9233);transform-origin:0 0;">using UdonSharp;</div>
<div class="t" style="left:656.2px;top:138.48px;font-size:4.6px;color:#d0d0d0;transform:scaleX(0.9177);transform-origin:0 0;">using UnityEngine;</div>
<div class="t" style="left:656.2px;top:143.48px;font-size:4.6px;color:#d0d0d0;transform:scaleX(0.8992);transform-origin:0 0;">using VRC.SDKBase;</div>
<div class="t" style="left:656.2px;top:148.48px;font-size:4.6px;color:#d0d0d0;transform:scaleX(0.9088);transform-origin:0 0;">using VRC.Udon;</div>
<div class="t" style="left:656.2px;top:158.48px;font-size:4.6px;color:#d0d0d0;transform:scaleX(0.9208);transform-origin:0 0;">public class OnOffSwitch : UdonSharpBehaviour</div>
<div class="t" style="left:656.2px;top:163.44px;font-size:4.79px;color:#d0d0d0;">{</div>
<div class="t" style="left:660.6px;top:168.48px;font-size:4.6px;color:#d0d0d0;transform:scaleX(0.9158);transform-origin:0 0;">void Start()</div>
<div class="t" style="left:660.6px;top:173.44px;font-size:4.79px;color:#d0d0d0;">{</div>
<div class="t" style="left:660.6px;top:183.44px;font-size:4.79px;color:#d0d0d0;">}</div>
<div class="t" style="left:656.2px;top:188.44px;font-size:4.79px;color:#d0d0d0;">}</div>
<div class="a" style="left:656px;top:455.7px;width:200px;height:6.8px;background:#3e3e3e;"></div>
<div class="a" style="left:656px;top:455.3px;width:200px;height:0.5px;background:#2a2a2a;"></div>
<div class="t" style="left:657.4px;top:458.18px;font-size:4.6px;color:#dcdcdc;font-weight:bold;transform:scaleX(0.902);transform-origin:0 0;">Asset Labels</div>
<div class="a" style="left:656px;top:462.5px;width:200px;height:9.7px;background:#383838;"></div>
<svg style="left:850.2px;top:464.6px" width="4.6" height="4.2" viewBox="0 0 10 9"><circle cx="5" cy="4.5" r="4.5" fill="#2f62b8"/><path d="M2.5 3V5L5.5 7.2L7.6 5L5 2.5H3Z" fill="#e8e8e8"/></svg>
<div class="a" style="left:856.5px;top:0px;width:1.5px;height:480px;background:#202020;"></div>
</div></body></html>
